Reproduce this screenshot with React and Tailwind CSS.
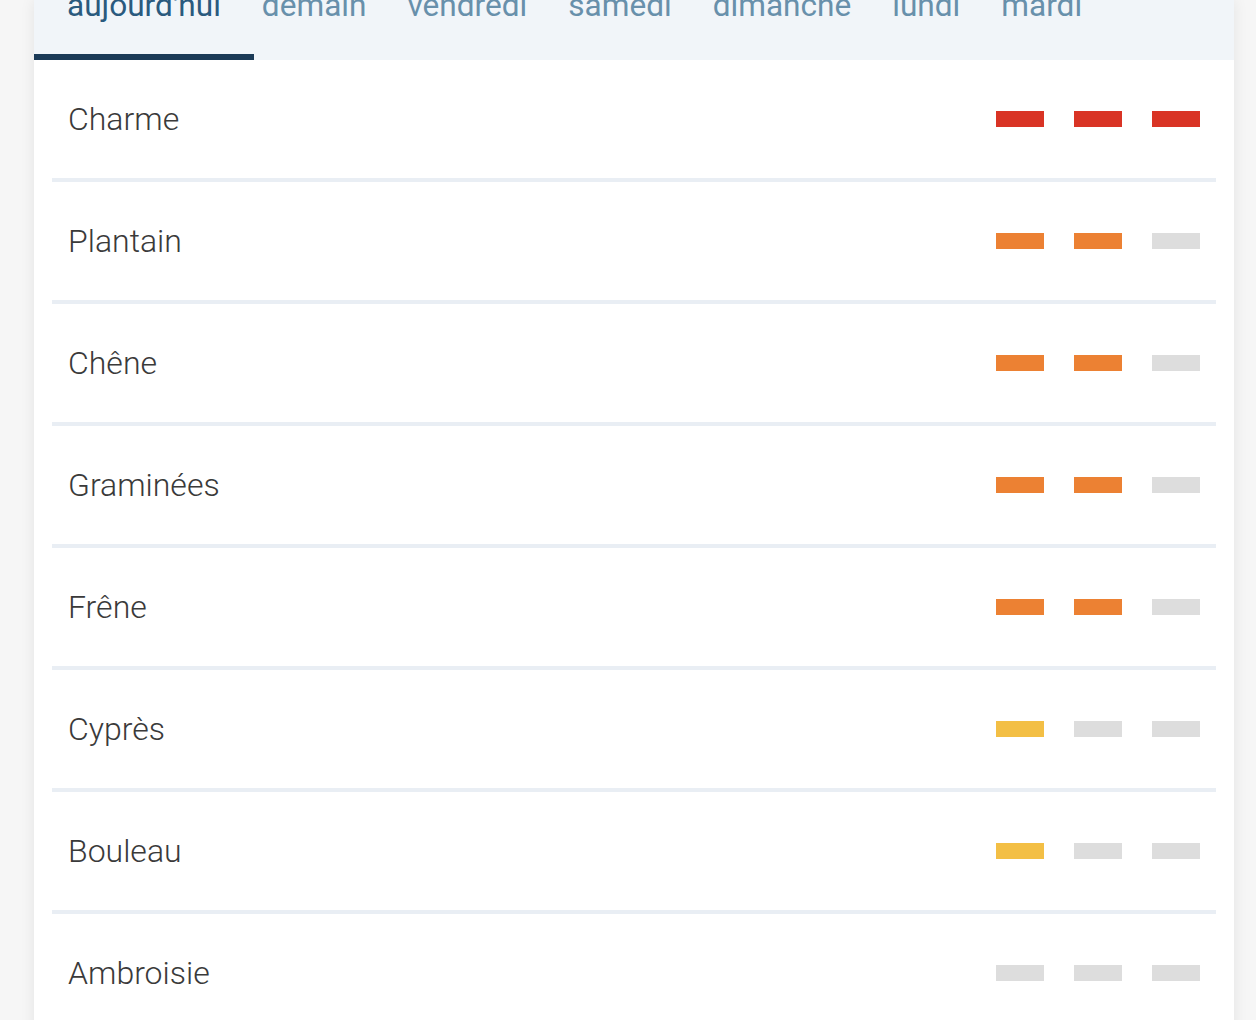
const tabs = ['demain', 'vendredi', 'samedi', 'dimanche', 'lundi', 'mardi'];

const COLORS = {
  r: 'bg-[#d93425]',
  o: 'bg-[#ec8133]',
  y: 'bg-[#f3bf45]',
  g: 'bg-[#dddddd]',
};

const pollens = [
  { name: 'Charme', levels: ['r', 'r', 'r'] },
  { name: 'Plantain', levels: ['o', 'o', 'g'] },
  { name: 'Chêne', levels: ['o', 'o', 'g'] },
  { name: 'Graminées', levels: ['o', 'o', 'g'] },
  { name: 'Frêne', levels: ['o', 'o', 'g'] },
  { name: 'Cyprès', levels: ['y', 'g', 'g'] },
  { name: 'Bouleau', levels: ['y', 'g', 'g'] },
  { name: 'Ambroisie', levels: ['g', 'g', 'g'] },
];

const App = () => {
  return (
    <div
      className="min-h-[1020px] bg-[#f6f6f6] overflow-hidden"
      style={{ fontFamily: 'Roboto, "Liberation Sans", sans-serif' }}
    >
      <div className="ml-[34px] w-[1200px] bg-white shadow-[0_0_14px_rgba(0,0,0,0.08)]">
        <div className="h-[60px] flex items-end overflow-hidden bg-[#f1f5f9] text-[31.6px] leading-8">
          <div className="px-[33px] pb-[32px] border-b-[6px] border-[#1b3a57] text-[#2a5a7e] whitespace-nowrap">
            aujourd'hui
          </div>
          <div className="flex gap-[41px] ml-[8px]">
            {tabs.map((t) => (
              <div key={t} className="pb-[38px] text-[#6890ab] whitespace-nowrap">
                {t}
              </div>
            ))}
          </div>
        </div>

        <div>
          {pollens.map((p) => (
            <div
              key={p.name}
              className="mx-[18px] h-[122px] px-[16px] flex items-center justify-between border-b-4 border-[#e9eef4]"
            >
              <span className="text-[32px] font-light text-[#3a3a3a]">{p.name}</span>
              <div className="flex gap-[30px]">
                {p.levels.map((l, i) => (
                  <div key={i} className={`w-[48px] h-[16px] ${COLORS[l]}`} />
                ))}
              </div>
            </div>
          ))}
        </div>
      </div>
    </div>
  );
};

export default App;
